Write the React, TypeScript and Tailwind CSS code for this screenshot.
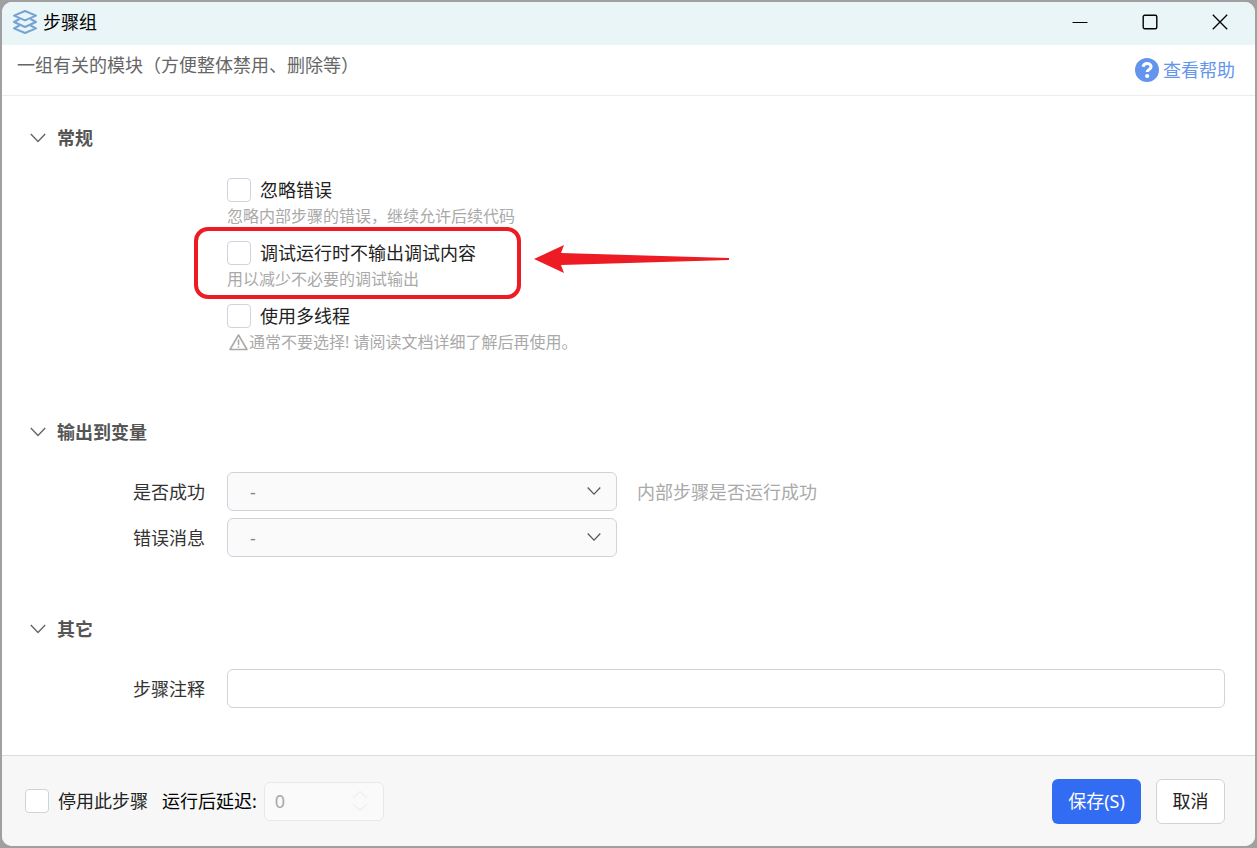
import type { ReactNode } from "react";

const fieldClass = "h-[39px] rounded-md border border-[#ced4dc]";

const LayersIcon = () => (
  <svg
    viewBox="0 0 24 24"
    className="size-6 text-[#74a3d4]"
    fill="none"
    stroke="currentColor"
    strokeWidth="2"
    strokeLinejoin="round"
    aria-hidden="true"
  >
    <path d="M12 1 23 5.700 12 10.400 1 5.700Z" />
    <path d="M6.500 9 1 12l11 5 11-5-5.500-3" />
    <path d="M6.500 15.500 1 18.300l11 4.700 11-4.700-5.500-2.800" />
  </svg>
);

const Chevron = ({ className }: { className: string }) => (
  <svg
    viewBox="0 0 16 10"
    className={className}
    fill="none"
    stroke="currentColor"
    strokeWidth="1.4"
    aria-hidden="true"
  >
    <path d="M.8 1 8 8.6 15.2 1" />
  </svg>
);

const TitleBar = () => (
  <header className="flex h-[43px] items-center justify-between bg-[#eaf5f7] pr-[23px] pb-[3px] pl-[11px] text-black">
    <h1 className="flex items-center gap-1.5 text-lg leading-6">
      <LayersIcon />
      步骤组
    </h1>
    <div className="flex gap-[46px]">
      <button type="button" aria-label="最小化" className="size-6 p-1">
        <svg viewBox="0 0 16 16" stroke="currentColor" strokeWidth="1.2">
          <path d="M.5 8.5h15" />
        </svg>
      </button>
      <button type="button" aria-label="最大化" className="size-6 p-1">
        <svg viewBox="0 0 16 16" fill="none" stroke="currentColor" strokeWidth="1.4">
          <rect x="1.2" y="1.2" width="13.6" height="13.6" rx="1.5" />
        </svg>
      </button>
      <button type="button" aria-label="关闭" className="size-6 p-1">
        <svg viewBox="0 0 16 16" stroke="currentColor" strokeWidth="1.3">
          <path d="m.8.8 14.4 14.4M15.2.8.8 15.2" />
        </svg>
      </button>
    </div>
  </header>
);

const HelpLink = () => (
  <a href="#help" className="flex items-center gap-1 text-lg leading-6 text-[#6495ed]">
    <svg viewBox="0 0 24 24" className="size-6" aria-hidden="true">
      <circle cx="12" cy="12" r="12" fill="currentColor" />
      <path
        d="M8 8.800C8.700 6.500 10.200 5.500 12.100 5.500c2.300 0 4 1.300 4 3.200 0 2.700-3.900 2.700-3.900 5.200"
        fill="none"
        stroke="#fff"
        strokeWidth="3"
      />
      <circle cx="12.200" cy="18" r="2.100" fill="#fff" />
    </svg>
    查看帮助
  </a>
);

const Section = ({ title, children }: { title: string; children: ReactNode }) => (
  <section>
    <h2 className="mb-[26px]">
      <button
        type="button"
        aria-expanded="true"
        className="flex h-7 items-center gap-[11px] text-lg leading-6 font-bold text-[#555]"
      >
        <Chevron className="h-2.5 w-4 text-[#666]" />
        {title}
      </button>
    </h2>
    {children}
  </section>
);

const Checkbox = ({ label, className = "" }: { label: string; className?: string }) => (
  <label className={`flex w-fit items-center gap-[9px] text-lg leading-6 text-[#222] ${className}`}>
    <input
      type="checkbox"
      className="size-6 appearance-none rounded border border-[#ced4dc] bg-white checked:bg-[#326cf3]"
    />
    {label}
  </label>
);

const Option = ({
  label,
  hint,
  children,
}: {
  label: string;
  hint: ReactNode;
  children?: ReactNode;
}) => (
  <div className="relative">
    <Checkbox label={label} />
    <p className="mt-0.5 flex items-center text-base leading-6 text-[#a9a9a9]">{hint}</p>
    {children}
  </div>
);

// Marco rojo y flecha que señalan la opción
const Callout = () => (
  <>
    <div className="pointer-events-none absolute -top-3.5 -left-[33px] h-[72px] w-[327px] rounded-[14px] border-4 border-[#ed1c24]" />
    <svg
      viewBox="0 0 196 28"
      className="pointer-events-none absolute top-1 left-[307px] h-7 w-[196px]"
      fill="#ed1c24"
      aria-hidden="true"
    >
      <path d="M0 14 30 0 27 8 195 13v2L27 20l3 8Z" />
    </svg>
  </>
);

const Field = ({
  id,
  label,
  children,
}: {
  id: string;
  label: string;
  children: ReactNode;
}) => (
  <div className="flex items-center">
    <label htmlFor={id} className="mr-[22px] w-[175px] text-right text-lg leading-6 text-[#333]">
      {label}
    </label>
    {children}
  </div>
);

const VariableSelect = ({ id }: { id: string }) => (
  <div className="relative w-[390px]">
    <select
      id={id}
      className={`w-full appearance-none bg-[#fafafa] px-[22px] text-lg leading-6 text-[#888] ${fieldClass}`}
    >
      <option>-</option>
    </select>
    <Chevron className="pointer-events-none absolute top-3.5 right-4 h-2.5 w-3.5 text-[#555]" />
  </div>
);

export default function App() {
  return (
    <div
      className="flex min-h-screen flex-col bg-[#a0a0a0] p-0.5"
      style={{ fontFamily: '"Noto Sans", "Noto Sans CJK SC", sans-serif' }}
    >
      <div className="flex flex-1 flex-col overflow-hidden rounded-[10px] bg-white">
        <TitleBar />
        <div className="flex h-[51px] justify-between border-b border-[#ececec] pt-2 pr-5 pl-[15px]">
          <p className="text-lg leading-6 text-[#666]">
            一组有关的模块（方便整体禁用、删除等）
          </p>
          <div className="pt-[5px]">
            <HelpLink />
          </div>
        </div>

        <main className="flex-1 pt-7 pr-[30px] pb-[46px] pl-7">
          <Section title="常规">
            <div className="mb-16 flex flex-col gap-[13px] pl-[197px]">
              <Option label="忽略错误" hint="忽略内部步骤的错误，继续允许后续代码" />
              <Option label="调试运行时不输出调试内容" hint="用以减少不必要的调试输出">
                <Callout />
              </Option>
              <Option
                label="使用多线程"
                hint={
                  <>
                    <svg
                      viewBox="0 0 22 18"
                      className="h-[18px] w-[22px]"
                      fill="none"
                      stroke="currentColor"
                      strokeWidth="1.6"
                      strokeLinejoin="round"
                      aria-hidden="true"
                    >
                      <path d="M11.500 2 20 16.500H3Z" />
                      <path d="M11.500 6.500v5.500M11.500 13.300v1.500" />
                    </svg>
                    通常不要选择! 请阅读文档详细了解后再使用。
                  </>
                }
              />
            </div>
          </Section>

          <Section title="输出到变量">
            <div className="mb-[58px] flex flex-col gap-[7px]">
              <Field id="success" label="是否成功">
                <VariableSelect id="success" />
                <span className="ml-5 text-lg leading-6 text-[#a9a9a9]">内部步骤是否运行成功</span>
              </Field>
              <Field id="error" label="错误消息">
                <VariableSelect id="error" />
              </Field>
            </div>
          </Section>

          <Section title="其它">
            <Field id="note" label="步骤注释">
              <input id="note" type="text" className={`min-w-0 flex-1 px-3 text-lg ${fieldClass}`} />
            </Field>
          </Section>
        </main>

        <footer className="flex h-[91px] items-center border-t border-[#dcdcdc] bg-[#f7f7f7] pr-[30px] pl-[23px] text-lg leading-6">
          <Checkbox label="停用此步骤" />
          <label htmlFor="delay" className="ml-3.5 text-black">
            运行后延迟:
          </label>
          <div className="relative ml-[7px] w-[120px]">
            <input
              id="delay"
              type="text"
              inputMode="numeric"
              defaultValue="0"
              disabled
              className="h-[39px] w-full rounded-md border border-[#e8e8e8] bg-[#fafafa] px-2.5 text-[#a9a9a9]"
            />
            <svg
              viewBox="0 0 16 22"
              className="pointer-events-none absolute top-2 right-4 h-[22px] w-4 text-[#f0f0f0]"
              fill="none"
              stroke="currentColor"
              strokeWidth="1.4"
              aria-hidden="true"
            >
              <path d="m1 8 7-6.500L15 8M1 14l7 6.500 7-6.500" />
            </svg>
          </div>
          <div className="ml-auto flex gap-[15px]">
            <button type="button" className="h-[45px] w-[89px] rounded-md bg-[#326cf3] text-white">
              保存(S)
            </button>
            <button
              type="button"
              className="h-[45px] w-[69px] rounded-md border border-[#ced4dc] bg-white text-[#222]"
            >
              取消
            </button>
          </div>
        </footer>
      </div>
    </div>
  );
}
